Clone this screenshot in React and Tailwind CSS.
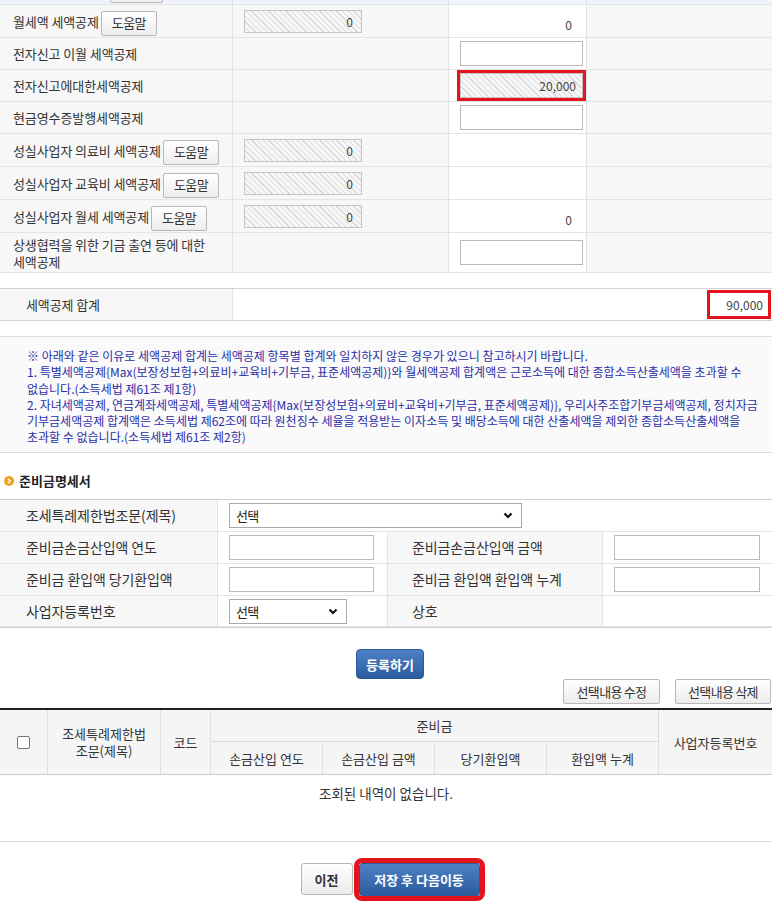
import React from "react";

const hatch =
  "bg-[repeating-linear-gradient(45deg,#f6f6f6_0px,#f6f6f6_3px,#d8d8d8_3px,#d8d8d8_4px)]";

const HelpBtn = () => (
  <button className="ml-[2px] mt-[4px] h-[25px] w-[56px] shrink-0 rounded-[2px] border border-[#b8b8b8] bg-gradient-to-b from-white to-[#ededed] text-[13px] tracking-[-0.6px] text-[#333]">
    도움말
  </button>
);

const Hatched = ({ value }) => (
  <div className={`ml-[11px] h-[23px] w-[118px] border border-[#c4c4c4] pr-[8px] text-right text-[12px] leading-[21px] text-[#444] ${hatch}`}>
    {value}
  </div>
);

const TextBox = ({ w = "w-[123px]" }) => (
  <input type="text" className={`ml-[11px] h-[25px] ${w} border border-[#b9b9b9] bg-white`} />
);

const Chevron = () => (
  <svg width="10" height="7" viewBox="0 0 10 7" className="shrink-0">
    <polyline points="1.5,1.5 5,5 8.5,1.5" fill="none" stroke="#111" strokeWidth="2.2" />
  </svg>
);

const SelectBox = ({ w }) => (
  <div className={`ml-[11px] flex h-[25px] ${w} items-center justify-between border border-[#a9a9a9] bg-white pl-[6px] pr-[8px] text-[13px] tracking-[-0.6px] text-[#222]`}>
    <span>선택</span>
    <Chevron />
  </div>
);

const TopRow = ({ label, help, c2, c3, h = "h-[33px]" }) => (
  <div className={`grid grid-cols-[233px_216px_138px_185px] ${h}`}>
    <div className="flex items-center border-r border-b border-[#e4e4e4] bg-[#f7f7f7] pl-[13px] text-[13px] tracking-[-0.1px] text-[#333]">
      <span className="leading-[17px]">{label}</span>
      {help && <HelpBtn />}
    </div>
    <div className="flex items-center border-r border-b border-[#e4e4e4] bg-[#f7f7f7]">{c2}</div>
    <div className="flex items-center border-r border-b border-[#e4e4e4] bg-white">{c3}</div>
    <div className="border-b border-[#e4e4e4] bg-[#f7f7f7]" />
  </div>
);

const Zero = () => (
  <div className="w-full pt-[7px] pr-[14px] text-right text-[12px] text-[#444]">0</div>
);

const FormLabel = ({ children, pl = "pl-[26px]" }) => (
  <div className={`flex items-center border-r border-b border-[#e4e4e4] bg-[#f7f7f7] ${pl} text-[14px] tracking-[-0.1px] text-[#333]`}>
    {children}
  </div>
);

const FormCell = ({ children, last }) => (
  <div className={`flex items-center border-b border-[#e4e4e4] bg-white ${last ? "" : "border-r"}`}>{children}</div>
);

const notes = [
  "※ 아래와 같은 이유로 세액공제 합계는 세액공제 항목별 합계와 일치하지 않은 경우가 있으니 참고하시기 바랍니다.",
  "1. 특별세액공제{Max(보장성보험+의료비+교육비+기부금, 표준세액공제)}와 월세액공제 합계액은 근로소득에 대한 종합소득산출세액을 초과할 수",
  "없습니다.(소득세법 제61조 제1항)",
  "2. 자녀세액공제, 연금계좌세액공제, 특별세액공제{Max(보장성보험+의료비+교육비+기부금, 표준세액공제)}, 우리사주조합기부금세액공제, 정치자금",
  "기부금세액공제 합계액은 소득세법 제62조에 따라 원천징수 세율을 적용받는 이자소득 및 배당소득에 대한 산출세액을 제외한 종합소득산출세액을",
  "초과할 수 없습니다.(소득세법 제61조 제2항)",
];

const GrayBtn = ({ children, w }) => (
  <button className={`h-[25px] ${w} rounded-[2px] border border-[#b8b8b8] bg-gradient-to-b from-white to-[#ececec] text-[13px] tracking-[-0.7px] text-[#333]`}>
    {children}
  </button>
);

export default function App() {
  return (
    <div className="min-h-[908px] w-[779px] bg-white font-['Noto_Sans_CJK_KR','Noto_Sans',sans-serif]">
      <div className="w-[772px]">
        {/* 잘린 윗줄 */}
        <div className="grid h-[5px] grid-cols-[233px_216px_138px_185px] overflow-hidden border-b border-[#e4e4e4] bg-[#eef4fa]">
          <div className="relative border-r border-[#e4e4e4]">
            <div className="absolute bottom-[1px] left-[110px] h-[10px] w-[53px] rounded-[2px] border border-[#b8b8b8] bg-[#f0f0f0]" />
          </div>
          <div className="border-r border-[#e4e4e4]" />
          <div className="border-r border-[#e4e4e4]" />
          <div />
        </div>

        <TopRow label="월세액 세액공제" help c2={<Hatched value="0" />} c3={<Zero />} />
        <TopRow label="전자신고 이월 세액공제" c3={<TextBox />} h="h-[32px]" />
        <TopRow
          label="전자신고에대한세액공제"
          h="h-[32px]"
          c3={
            <div className="ml-[11px] h-[25px] w-[123px] outline-[3px] outline-[#e3141c] outline-solid">
              <div className={`h-full w-full border border-[#c4c4c4] pr-[6px] text-right text-[12px] leading-[23px] text-[#444] ${hatch}`}>
                20,000
              </div>
            </div>
          }
        />
        <TopRow label="현금영수증발행세액공제" c3={<TextBox />} h="h-[32px]" />
        <TopRow label="성실사업자 의료비 세액공제" help c2={<Hatched value="0" />} />
        <TopRow label="성실사업자 교육비 세액공제" help c2={<Hatched value="0" />} />
        <TopRow label="성실사업자 월세 세액공제" help c2={<Hatched value="0" />} c3={<Zero />} />
        <TopRow
          label={
            <>
              상생협력을 위한 기금 출연 등에 대한
              <br />
              세액공제
            </>
          }
          h="h-[40px]"
          c3={<TextBox />}
        />

        {/* 세액공제 합계 */}
        <div className="mt-[15px] grid h-[33px] grid-cols-[233px_539px] border-y border-[#d2d2d2]">
          <div className="flex items-center border-r border-[#e4e4e4] bg-[#f7f7f7] pl-[26px] text-[13px] tracking-[-0.1px] text-[#333]">
            세액공제 합계
          </div>
          <div className="flex items-center justify-end bg-white pr-[1px]">
            <span className="flex h-[29px] w-[64px] items-center justify-end border-[3px] border-[#e3141c] pr-[5px] text-[12px] text-[#444]">
              90,000
            </span>
          </div>
        </div>

        {/* 안내 문구 */}
        <div className="mt-[15px] border-y border-[#dcdcdc] bg-[#fafafa] pt-[11px] pb-[6px] pl-[27px]">
          {notes.map((t, i) => (
            <div key={i} className="whitespace-nowrap text-[12px] leading-[16.3px] text-[#2a2fa6]">
              {t}
            </div>
          ))}
        </div>

        {/* 준비금명세서 */}
        <div className="mt-[18px] flex items-center gap-[5px] pl-[4px]">
          <svg width="10" height="10" viewBox="0 0 11 11">
            <circle cx="5.5" cy="5.5" r="5.5" fill="#f0a21f" />
            <polyline points="4.3,3 6.8,5.5 4.3,8" fill="none" stroke="#fff" strokeWidth="1.6" />
          </svg>
          <span className="text-[13px] font-bold text-[#222]">준비금명세서</span>
        </div>

        <div className="mt-[9px] border-t border-[#cfcfcf]">
          <div className="grid h-[32px] grid-cols-[218px_554px]">
            <FormLabel>조세특례제한법조문(제목)</FormLabel>
            <FormCell last>
              <SelectBox w="w-[293px]" />
            </FormCell>
          </div>
          <div className="grid h-[32px] grid-cols-[218px_170px_215px_169px]">
            <FormLabel>준비금손금산입액 연도</FormLabel>
            <FormCell>
              <TextBox w="w-[145px]" />
            </FormCell>
            <FormLabel pl="pl-[24px]">준비금손금산입액 금액</FormLabel>
            <FormCell last>
              <TextBox w="w-[146px]" />
            </FormCell>
          </div>
          <div className="grid h-[32px] grid-cols-[218px_170px_215px_169px]">
            <FormLabel>준비금 환입액 당기환입액</FormLabel>
            <FormCell>
              <TextBox w="w-[145px]" />
            </FormCell>
            <FormLabel pl="pl-[24px]">준비금 환입액 환입액 누계</FormLabel>
            <FormCell last>
              <TextBox w="w-[146px]" />
            </FormCell>
          </div>
          <div className="grid h-[32px] grid-cols-[218px_170px_215px_169px] border-b border-[#cfcfcf]">
            <FormLabel>사업자등록번호</FormLabel>
            <FormCell>
              <SelectBox w="w-[118px]" />
            </FormCell>
            <FormLabel pl="pl-[24px]">상호</FormLabel>
            <FormCell last />
          </div>
        </div>

        <div className="mt-[21px] flex justify-center pl-[8px]">
          <button className="h-[30px] w-[68px] rounded-[4px] border border-[#2d5b98] bg-gradient-to-b from-[#4d81c4] to-[#2c5c9e] text-[13px] font-bold text-white">
            등록하기
          </button>
        </div>

        <div className="mt-0 flex justify-end gap-[15px] pr-[1px]">
          <GrayBtn w="w-[97px]">선택내용 수정</GrayBtn>
          <GrayBtn w="w-[96px]">선택내용 삭제</GrayBtn>
        </div>

        {/* 목록 */}
        <div className="mt-[4px] border-t-2 border-[#222]">
          <div className="grid grid-cols-[48px_113px_50px_112px_112px_112px_112px_113px] border-b border-[#c9c9c9] bg-[#f5f5f5] text-[13px] text-[#333]">
            <div className="row-span-2 flex items-center justify-center border-r border-[#e0e0e0]">
              <span className="h-[13px] w-[13px] rounded-[2px] border border-[#767676] bg-white" />
            </div>
            <div className="row-span-2 flex items-center justify-center border-r border-[#e0e0e0] text-center leading-[17px]">
              조세특례제한법
              <br />
              조문(제목)
            </div>
            <div className="row-span-2 flex items-center justify-center border-r border-[#e0e0e0]">코드</div>
            <div className="col-span-4 flex h-[32px] items-center justify-center border-r border-b border-[#d8d8d8]">
              준비금
            </div>
            <div className="row-span-2 flex items-center justify-center">사업자등록번호</div>
            <div className="flex h-[32px] items-center justify-center border-r border-[#e0e0e0]">손금산입 연도</div>
            <div className="flex h-[32px] items-center justify-center border-r border-[#e0e0e0]">손금산입 금액</div>
            <div className="flex h-[32px] items-center justify-center border-r border-[#e0e0e0]">당기환입액</div>
            <div className="flex h-[32px] items-center justify-center border-r border-[#e0e0e0]">환입액 누계</div>
          </div>
          <div className="flex h-[36px] items-center justify-center text-[13.5px] text-[#333]">
            조회된 내역이 없습니다.
          </div>
        </div>

        <div className="mt-[30px] flex justify-center gap-[6px] border-t border-[#dcdcdc] pt-[21px] pl-[8px]">
          <button className="h-[32px] w-[52px] rounded-[3px] border border-[#b5b5b5] bg-gradient-to-b from-white to-[#ebebeb] text-[13px] font-bold text-[#333]">
            이전
          </button>
          <button className="h-[33px] w-[121px] rounded-[3px] border border-[#2d5b98] bg-gradient-to-b from-[#4d81c4] to-[#2c5c9e] text-[13px] font-bold text-white outline-[5px] outline-[#e3141c] outline-solid">
            저장 후 다음이동
          </button>
        </div>
      </div>
    </div>
  );
}
